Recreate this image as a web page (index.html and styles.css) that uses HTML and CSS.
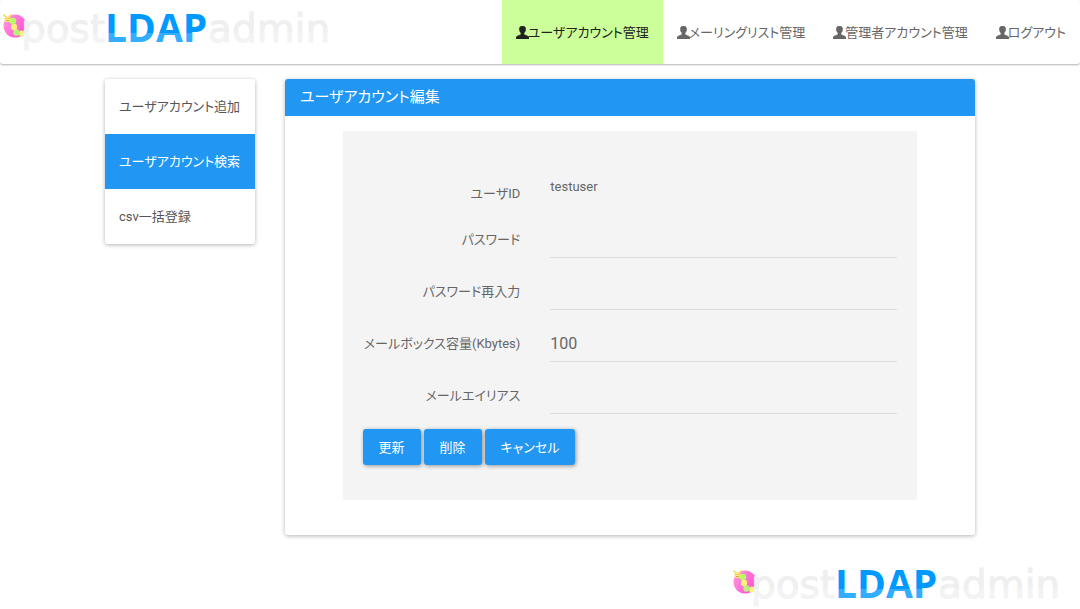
FILE: index.html
```html
<!DOCTYPE html>
<html lang="ja">
<head>
<meta charset="utf-8">
<meta name="viewport" content="width=device-width, initial-scale=1">
<title>postLDAPadmin</title>
<link rel="stylesheet" href="styles.css">
</head>
<body>
<svg class="defs" width="0" height="0" aria-hidden="true">
  <defs>
    <linearGradient id="blue" gradientUnits="userSpaceOnUse" x1="0" y1="0" x2="0" y2="50">
      <stop offset="0.66" stop-color="#0099ff"/><stop offset="0.67" stop-color="#33adff"/>
    </linearGradient>
    <linearGradient id="gray" gradientUnits="userSpaceOnUse" x1="0" y1="0" x2="0" y2="50">
      <stop offset="0.66" stop-color="#efefef"/><stop offset="0.67" stop-color="#f3f3f3"/>
    </linearGradient>
    <linearGradient id="pink" x1="0" y1="0" x2="1" y2="0.6">
      <stop offset="0" stop-color="#ff9fe0"/><stop offset="1" stop-color="#ff4fd0"/>
    </linearGradient>
    <symbol id="logo" viewBox="0 0 335 53">
      <circle cx="15" cy="26" r="11.5" fill="url(#pink)"/>
      <circle cx="22" cy="33.500" r="3" fill="#ffee80"/>
      <circle cx="16.500" cy="32.500" r="3.200" fill="#b8f27c"/>
      <circle cx="14" cy="27" r="3.200" fill="#fff080"/>
      <circle cx="13" cy="21" r="3.200" fill="#b4ff60"/>
      <path d="M3.500 14.500l3 3M11.500 14.500l-2.500 3" stroke="#f2d95a" stroke-width="1.500" fill="none"/>
      <rect x="4.500" y="16.500" width="6" height="5.500" rx="2" fill="#ffe97a"/>
      <path d="M6 18v1M9 18v1M6 20.500h3" stroke="#b99a28" stroke-width="0.800" fill="none"/>
      <text class="logo-soft" x="21" y="42" fill="url(#gray)" stroke="url(#gray)">post</text>
      <text class="logo-main" x="105" y="42" fill="url(#blue)">LDAP</text>
      <text class="logo-soft" x="208" y="42" fill="url(#gray)" stroke="url(#gray)">admin</text>
    </symbol>
    <symbol id="user" viewBox="0 0 13 13">
      <path d="M6.500 0C4.300 0 3.300 1.500 3.400 3.300C3.500 5 4.200 6.200 5 7V8.400C4.600 9.200 0.300 9.600 0 11.500V13H13V11.500C12.700 9.600 8.400 9.200 8 8.400V7C8.800 6.200 9.500 5 9.600 3.300C9.700 1.500 8.700 0 6.500 0Z" fill="currentColor" stroke="currentColor" stroke-width="0.600"/>
    </symbol>
  </defs>
</svg>

<header class="navbar">
  <a class="brand" href="#"><svg class="logo" role="img" aria-label="postLDAPadmin"><use href="#logo"/></svg></a>
  <nav class="nav">
    <a class="nav-link active" href="#"><svg class="icon"><use href="#user"/></svg>ユーザアカウント管理</a>
    <a class="nav-link" href="#"><svg class="icon"><use href="#user"/></svg>メーリングリスト管理</a>
    <a class="nav-link" href="#"><svg class="icon"><use href="#user"/></svg>管理者アカウント管理</a>
    <a class="nav-link" href="#"><svg class="icon"><use href="#user"/></svg>ログアウト</a>
  </nav>
</header>

<div class="container">
  <nav class="side card">
    <a class="side-link" href="#">ユーザアカウント追加</a>
    <a class="side-link active" href="#">ユーザアカウント検索</a>
    <a class="side-link" href="#">csv一括登録</a>
  </nav>
  <main class="panel card">
    <h1 class="panel-title">ユーザアカウント編集</h1>
    <form class="form">
      <div class="row row-static">
        <span class="label">ユーザID</span>
        <span class="static">testuser</span>
      </div>
      <div class="row">
        <label class="label" for="pw">パスワード</label>
        <input class="field" id="pw" type="password">
      </div>
      <div class="row">
        <label class="label" for="pw2">パスワード再入力</label>
        <input class="field" id="pw2" type="password">
      </div>
      <div class="row">
        <label class="label" for="quota">メールボックス容量(Kbytes)</label>
        <input class="field" id="quota" type="text" value="100">
      </div>
      <div class="row">
        <label class="label" for="alias">メールエイリアス</label>
        <input class="field" id="alias" type="text">
      </div>
      <div class="actions">
        <button class="btn" type="button">更新</button>
        <button class="btn" type="button">削除</button>
        <button class="btn" type="button">キャンセル</button>
      </div>
    </form>
  </main>
</div>

<footer class="footer">
  <svg class="logo" role="img" aria-label="postLDAPadmin"><use href="#logo"/></svg>
</footer>
</body>
</html>
```
FILE: styles.css
```css
* { box-sizing: border-box; }

body {
  margin: 0;
  background: #fff;
  color: #666;
  font-family: Roboto, "Noto Sans CJK JP", sans-serif;
  font-size: 13px;
  line-height: 23px;
  font-feature-settings: "palt";
}

a { color: inherit; text-decoration: none; }
.defs { position: absolute; }

.logo { display: block; width: 335px; height: 53px; }
.logo-soft { font: 39px "DejaVu Sans", sans-serif; stroke-width: 1px; }
.logo-main { font: bold 39px "Open Sans", sans-serif; }

.navbar {
  display: flex;
  justify-content: space-between;
  height: 64px;
  border-radius: 3px;
  box-shadow: 0 1px 2px rgba(0, 0, 0, 0.3);
}
.nav { display: flex; }
.nav-link {
  display: flex;
  align-items: center;
  padding: 0 14px;
  white-space: nowrap;
}
.nav-link.active { background: #cf9; color: #212121; }
.icon { width: 13px; height: 13px; margin-right: -1px; }

.container {
  display: grid;
  grid-template-columns: 150px 1fr;
  align-items: start;
  gap: 30px;
  max-width: 870px;
  margin: 15px auto 0;
}
.card {
  border-radius: 3px;
  box-shadow: 0 1px 4px rgba(0, 0, 0, 0.3);
  overflow: hidden;
}

.side-link {
  display: block;
  padding: 16px 14px;
  color: #555;
  white-space: nowrap;
}
.side-link.active { background: #2196f3; color: #fff; }

.panel { padding-bottom: 35px; }
.panel-title {
  margin: 0 0 15px;
  padding: 7px 15px;
  background: #2196f3;
  color: #fff;
  font-size: 15px;
  font-weight: 400;
}

.form {
  width: 83.333%;
  margin: 0 auto;
  padding: 44px 20px 35px;
  background: #f4f4f4;
}
.row {
  display: grid;
  grid-template-columns: 5fr 11fr;
  align-items: center;
  gap: 30px;
  margin-bottom: 15px;
}
.row-static { align-items: start; margin-bottom: 9px; }
.label { text-align: right; white-space: nowrap; line-height: 37px; font-weight: 400; }
.static { font-weight: 400; }
.field {
  width: 100%;
  height: 37px;
  padding: 0;
  border: 0;
  border-bottom: 1px solid #ddd;
  background: transparent;
  color: #666;
  font: 16px Roboto, "Noto Sans CJK JP", sans-serif;
  outline: 0;
}

.actions { display: flex; gap: 3px; }
.btn {
  height: 36px;
  padding: 0 16px;
  border: 0;
  border-radius: 3px;
  background: #2196f3;
  color: #fff;
  font: inherit;
  font-feature-settings: inherit;
  box-shadow: 1px 1px 4px rgba(0, 0, 0, 0.4);
}

.footer {
  display: flex;
  justify-content: flex-end;
  margin-top: 21px;
  padding-right: 15px;
}
```
